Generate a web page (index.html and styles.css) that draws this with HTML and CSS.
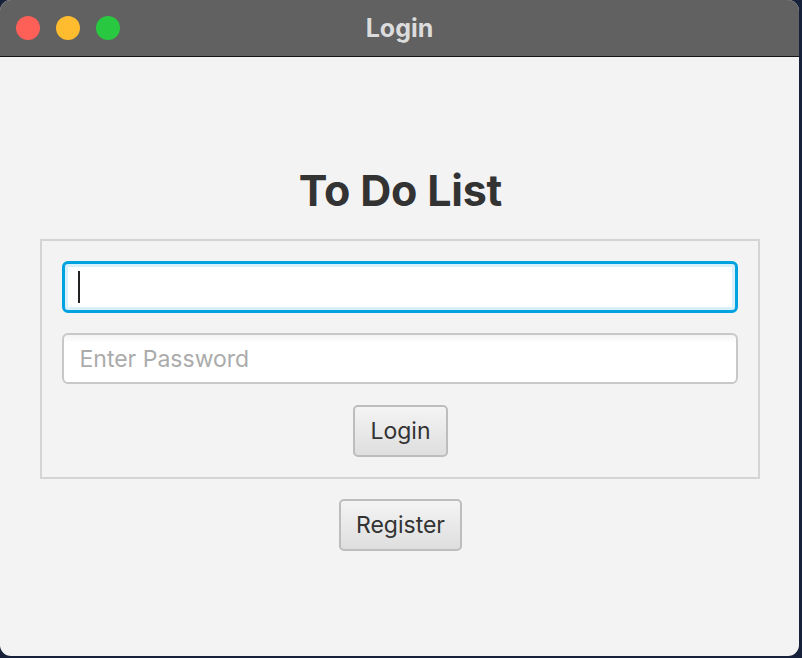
FILE: index.html
```html
<!DOCTYPE html>
<html>
<head>
<meta charset="utf-8">
<link rel="stylesheet" href="styles.css">
</head>
<body>
<div class="window">
  <div class="titlebar">
    <div class="lights">
      <span class="light red"></span>
      <span class="light yellow"></span>
      <span class="light green"></span>
    </div>
    <div class="wintitle">Login</div>
  </div>
  <div class="content">
    <h1 class="heading">To Do List</h1>
    <div class="box">
      <div class="field focused"><span class="caret"></span></div>
      <div class="field"><span class="placeholder">Enter Password</span></div>
      <button class="btn">Login</button>
    </div>
    <button class="btn register">Register</button>
  </div>
</div>
</body>
</html>
```
FILE: styles.css
```css
html, body {
  margin: 0;
  padding: 0;
  background: #18213a;
  width: 802px;
  height: 658px;
  overflow: hidden;
  font-family: Inter, "Noto Sans", sans-serif;
}
.window {
  width: 799px;
  height: 656px;
  border-radius: 11px;
  overflow: hidden;
  background: #f3f3f3;
  display: flex;
  flex-direction: column;
}
.titlebar {
  height: 56px;
  flex: none;
  background: #616161;
  border-bottom: 1px solid #151515;
  position: relative;
  display: flex;
  align-items: center;
  justify-content: center;
}
.lights {
  position: absolute;
  left: 16px;
  top: 16px;
  display: flex;
  gap: 16px;
}
.light {
  width: 24px;
  height: 24px;
  border-radius: 50%;
  display: block;
}
.red { background: #fe5f57; }
.yellow { background: #febc2e; }
.green { background: #28c840; }
.wintitle {
  color: #dcdcdc;
  font-weight: 700;
  font-size: 25px;
  margin-top: -1px;
}
.content {
  flex: 1;
  display: flex;
  flex-direction: column;
  align-items: center;
}
.heading {
  margin: 103px 0 0 0;
  font-size: 43px;
  line-height: 60px;
  font-weight: 700;
  color: #333333;
  letter-spacing: -0.2px;
  padding-left: 2px;
}
.box {
  margin-top: 19px;
  width: 676px;
  border: 2px solid #d4d4d4;
  padding: 20px;
  display: flex;
  flex-direction: column;
  align-items: center;
  gap: 20px;
}
.field {
  box-sizing: border-box;
  width: 676px;
  height: 51px;
  background: linear-gradient(#f4f4f4, #ffffff 8px);
  border: 2px solid #c8c8c8;
  border-radius: 6px;
  display: flex;
  align-items: center;
  padding-left: 16px;
}
.field.focused {
  height: 52px;
  border: 3px solid #00a2e0;
  box-shadow: inset 0 0 0 3px #d8f0fa;
  background: #ffffff;
  padding-left: 13px;
}
.caret {
  width: 2px;
  height: 32px;
  background: #222;
  display: block;
}
.placeholder {
  color: #ababab;
  font-size: 23px;
}
.btn {
  box-sizing: border-box;
  height: 52px;
  padding: 0 15px;
  font-family: Inter, "Noto Sans", sans-serif;
  font-size: 23px;
  color: #333;
  border: 2px solid #bdbdbd;
  border-radius: 5px;
  background: linear-gradient(#f4f4f4, #dedede);
  margin-top: 1px;
  margin-left: 2px;
}
.register {
  margin-top: 20px;
}
```
